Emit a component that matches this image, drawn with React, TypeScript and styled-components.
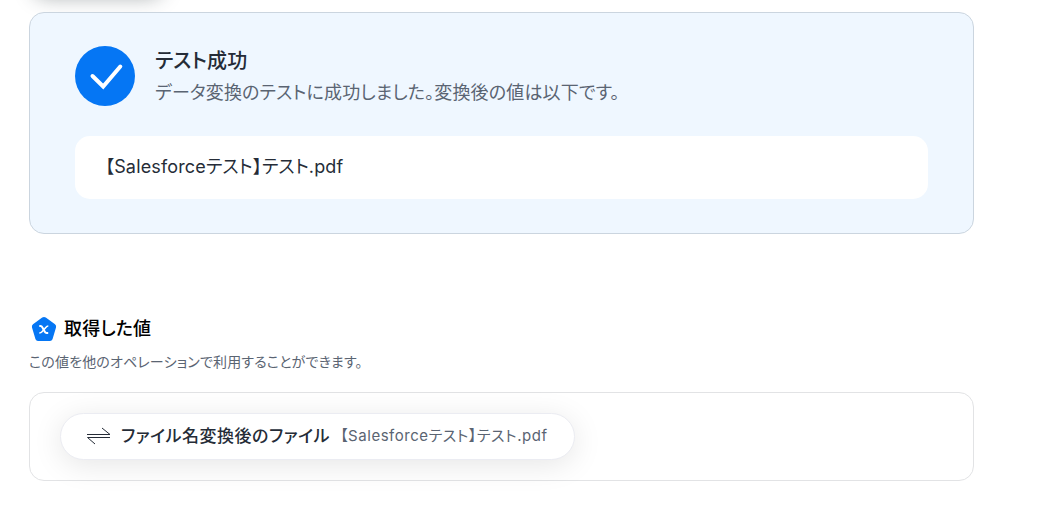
import React from "react";
import styled, { createGlobalStyle } from "styled-components";

const GlobalStyle = createGlobalStyle`
  *, *::before, *::after { box-sizing: border-box; }
  body {
    margin: 0;
    background: #fff;
    color: #252c37;
    font-family: Inter, "Noto Sans CJK JP", sans-serif;
    font-feature-settings: "palt";
    letter-spacing: 0.01em;
    overflow-x: hidden;
  }
  h2, h3, p { margin: 0; }
`;

const Page = styled.main`
  position: relative;
  display: flex;
  flex-direction: column;
  gap: 80px;
  padding: 12px 74px 24px 29px;
`;

const ScrolledShadow = styled.div`
  position: absolute;
  top: -52px;
  left: 34px;
  width: 128px;
  height: 44px;
  border-radius: 12px;
  box-shadow: 0 5px 20px rgba(37, 50, 55, 0.4);
`;

const ResultPanel = styled.section`
  position: relative;
  display: flex;
  flex-direction: column;
  gap: 30px;
  padding: 33px 45px 34px;
  background: #eff7ff;
  border: 1px solid #cbd5df;
  border-radius: 15px;
`;

const ResultHeader = styled.div`
  display: flex;
  align-items: center;
  gap: 20px;
`;

const ResultText = styled.div`
  display: flex;
  flex-direction: column;
  gap: 4px;
`;

const ResultTitle = styled.h2`
  font-size: 20px;
  line-height: 30px;
  font-weight: 500;
`;

const ResultMessage = styled.p`
  font-size: 18px;
  line-height: 26px;
  color: #5a6472;
`;

const ResultValue = styled.p`
  padding: 17px 30px 18px;
  background: #fff;
  border-radius: 15px;
  font-size: 18px;
  line-height: 28px;
`;

const Values = styled.section`
  display: flex;
  flex-direction: column;
`;

const ValuesHeading = styled.div`
  display: flex;
  align-items: center;
  gap: 7px;
  padding: 1px 0 0 2px;
`;

const ValuesTitle = styled.h3`
  font-size: 18px;
  line-height: 28px;
  font-weight: 500;
  color: #000;
`;

const ValuesNote = styled.p`
  margin: 9px 0 20px;
  font-size: 14px;
  line-height: 20px;
  color: #5a6472;
`;

const ValuesBox = styled.div`
  display: flex;
  padding: 20px 30px;
  border: 1px solid #e2e3e5;
  border-radius: 15px;
`;

const ValueChip = styled.button`
  display: flex;
  align-items: center;
  gap: 10px;
  padding: 8px 26px 9px 25px;
  background: #fff;
  border: 1px solid #ebecf2;
  border-radius: 24px;
  box-shadow: 0 5px 30px rgba(0, 0, 0, 0.1);
  color: inherit;
  font-family: inherit;
  font-feature-settings: inherit;
  letter-spacing: 0.04em;
`;

const ChipName = styled.span`
  font-size: 17px;
  line-height: 28px;
  font-weight: 500;
`;

const ChipValue = styled.span`
  font-size: 15px;
  line-height: 28px;
  color: #5a6472;
`;

const SuccessIcon = () => (
  <svg width="60" height="60" viewBox="0 0 60 60" aria-hidden="true">
    <circle cx="30" cy="30" r="30" fill="#0576f4" />
    <path d="M17.5 30 28.2 40.5 45.3 20.5" fill="none" stroke="#fff" strokeWidth="4" strokeLinecap="round" strokeLinejoin="miter" />
  </svg>
);

const VariableIcon = () => (
  <svg width="26" height="26" viewBox="0 0 26 26" aria-hidden="true">
    <path d="M11.2 1.6Q13 .4 14.8 1.6L24 8.2Q25.6 9.4 25 11.4L21.5 23.3Q20.8 25 19 25H7Q5.2 25 4.5 23.3L1 11.4Q.4 9.4 2 8.2Z" fill="#0576f4" />
    <path d="M8.3 10H9.5Q10.7 10 11.3 11.2L13.8 15.8Q14.4 17 15.6 17H17.2" fill="none" stroke="#fff" strokeWidth="2" />
    <path d="M17.3 10Q15.9 10 15 11.2L11 15.8Q10 17 8.3 17" fill="none" stroke="#fff" strokeWidth="1.6" />
  </svg>
);

const ConvertIcon = () => (
  <svg width="25" height="18" viewBox="0 0 25 18" fill="none" stroke="#252c37" strokeWidth="1" aria-hidden="true">
    <path d="M1 7.5H24L16 1M24 10.5H1.5L9 17" />
  </svg>
);

export default function App() {
  return (
    <>
      <GlobalStyle />
      <Page>
        <ScrolledShadow />
        <ResultPanel>
          <ResultHeader>
            <SuccessIcon />
            <ResultText>
              <ResultTitle>テスト成功</ResultTitle>
              <ResultMessage>データ変換のテストに成功しました。変換後の値は以下です。</ResultMessage>
            </ResultText>
          </ResultHeader>
          <ResultValue>【Salesforceテスト】テスト.pdf</ResultValue>
        </ResultPanel>
        <Values>
          <ValuesHeading>
            <VariableIcon />
            <ValuesTitle>取得した値</ValuesTitle>
          </ValuesHeading>
          <ValuesNote>この値を他のオペレーションで利用することができます。</ValuesNote>
          <ValuesBox>
            <ValueChip type="button">
              <ConvertIcon />
              <ChipName>ファイル名変換後のファイル</ChipName>
              <ChipValue>【Salesforceテスト】テスト.pdf</ChipValue>
            </ValueChip>
          </ValuesBox>
        </Values>
      </Page>
    </>
  );
}
